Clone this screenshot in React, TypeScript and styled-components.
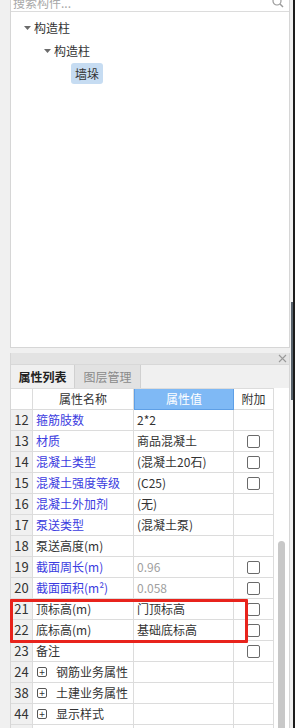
import React from 'react'
import styled, {createGlobalStyle} from 'styled-components'

const GlobalStyle = createGlobalStyle`
  html, body {
    margin: 0;
    padding: 0;
    background: #f0f0f0;
    overflow: hidden;
  }
  body {
    font-family: "Noto Sans CJK SC", "Noto Sans", sans-serif;
    font-size: 12px;
    color: #333;
  }
`

const Page = styled.div`
  display: flex;
  width: 295px;
  height: 728px;
  overflow: hidden;
`

const Main = styled.div`
  width: 280px;
  padding-left: 10px;
  display: flex;
  flex-direction: column;
`

const Edge = styled.div`
  width: 5px;
  display: flex;
  padding-left: 1px;
  box-sizing: border-box;
`
const EdgeInner = styled.div`
  width: 2px;
  display: flex;
  flex-direction: column;
`
const EdgeSpacer = styled.div`
  height: 302px;
`
const EdgeSlate = styled.div`
  height: 98px;
  background: #57626c;
`
const EdgeLine = styled.div`
  width: 2px;
  background: #1c1c1c;
`

/* ---------- tree panel ---------- */

const TreePanel = styled.div`
  height: 348px;
  box-sizing: border-box;
  background: #fff;
  border: 1px solid #d6d6d6;
  border-top: none;
  display: flex;
  flex-direction: column;
`

const SearchRow = styled.div`
  height: 11px;
  border-bottom: 1px solid #dcdcdc;
  display: flex;
  align-items: flex-end;
  justify-content: space-between;
  padding: 0 5px 0 2px;
  overflow: hidden;
`
const SearchText = styled.span`
  color: #a8a8a8;
  font-size: 12px;
  line-height: 14px;
  margin-bottom: 1px;
`

const TreeBody = styled.div`
  flex: 1;
  padding-top: 4px;
  display: flex;
  flex-direction: column;
`

const TreeRow = styled.div<{level: number}>`
  height: 23px;
  display: flex;
  align-items: center;
  padding-left: ${(p) => 13 + p.level * 20}px;
`
const Caret = styled.span`
  width: 7px;
  margin-right: 3px;
  display: flex;
  align-items: center;
`
const LeafGap = styled.span`
  width: 7px;
`
const TreeLabel = styled.span<{selected?: boolean}>`
  line-height: 21px;
  height: 21px;
  padding: ${(p) => (p.selected ? '0 4px' : '0')};
  border-radius: 3px;
  background: ${(p) => (p.selected ? '#c6dcf2' : 'transparent')};
  color: #333;
`

/* ---------- property panel ---------- */

const Gap = styled.div`
  height: 5px;
`

const PropPanel = styled.div`
  flex: 1;
  display: flex;
  flex-direction: column;
  border-left: 1px solid #d6d6d6;
  border-right: 1px solid #d6d6d6;
  background: #f0f0f0;
  min-height: 0;
`

const TitleBar = styled.div`
  height: 11px;
  background: #e3e3e3;
  display: flex;
  align-items: center;
  justify-content: flex-end;
  padding-right: 2px;
`

const TabStrip = styled.div`
  height: 23px;
  display: flex;
  border-top: 1px solid #d8d8d8;
`
const Tab = styled.div<{active?: boolean}>`
  width: ${(p) => (p.active ? '63px' : '65px')};
  display: flex;
  align-items: center;
  justify-content: center;
  border-right: 1px solid #d0d0d0;
  background: ${(p) => (p.active ? '#f0f0f0' : '#e2e2e2')};
  color: ${(p) => (p.active ? '#222' : '#8a8a8a')};
  font-weight: ${(p) => (p.active ? 700 : 400)};
  font-size: 12px;
`

const TableArea = styled.div`
  flex: 1;
  display: flex;
  min-height: 0;
`

const Table = styled.div`
  width: 263px;
  display: flex;
  flex-direction: column;
  background: #fff;
`

const Row = styled.div<{header?: boolean}>`
  display: grid;
  grid-template-columns: 22px 101px 100px 40px;
  height: ${(p) => (p.header ? '22px' : '21px')};
  flex-shrink: 0;
  border-top: ${(p) => (p.header ? '1px solid #dcdcdc' : 'none')};
  box-sizing: border-box;
`

const Cell = styled.div<{kind?: 'num' | 'name' | 'value' | 'extra' | 'hot'}>`
  box-sizing: border-box;
  border-right: 1px solid #dcdcdc;
  border-bottom: 1px solid #dcdcdc;
  display: flex;
  align-items: center;
  overflow: hidden;
  white-space: nowrap;
  line-height: 20px;
  padding-left: ${(p) => (p.kind === 'name' || p.kind === 'value' ? '3px' : '0')};
  justify-content: ${(p) =>
    p.kind === 'num' || p.kind === 'extra' ? 'center' : 'flex-start'};
  background: ${(p) =>
    p.kind === 'num' ? '#f0f0f0' : p.kind === 'hot' ? '#7fb9f5' : '#fff'};
`

const HeadCell = styled(Cell)`
  justify-content: center;
  padding-left: 0;
  color: ${(p) => (p.kind === 'hot' ? '#fff' : '#333')};
  ${(p) => (p.kind === 'hot' ? 'border: 1px solid #5e9fe6; border-top: none;' : '')}
`

const NumText = styled.span`
  font-size: 13px;
  color: #333;
`

const NameText = styled.span<{blue?: boolean}>`
  color: ${(p) => (p.blue ? '#3b3be0' : '#333')};
`

const ValueText = styled.span<{muted?: boolean}>`
  color: ${(p) => (p.muted ? '#a0a0a0' : '#333')};
`

const Check = styled.span`
  width: 13px;
  height: 13px;
  box-sizing: border-box;
  border: 1px solid #6a6a6a;
  border-radius: 2px;
  background: #fff;
`

const Expander = styled.span`
  width: 10px;
  height: 10px;
  box-sizing: border-box;
  border: 1px solid #555;
  border-radius: 2px;
  margin: 0 9px 0 1px;
  display: flex;
  align-items: center;
  justify-content: center;
  font-size: 10px;
  line-height: 10px;
  color: #333;
`

const Marked = styled.div`
  position: relative;
  display: flex;
  flex-direction: column;
  &::after {
    content: '';
    position: absolute;
    left: -1px;
    right: 26px;
    top: 0;
    bottom: -2px;
    border: 3px solid #e8231c;
    border-radius: 1px;
    pointer-events: none;
  }
`

const ScrollTrack = styled.div`
  width: 15px;
  background: #fff;
  display: flex;
  justify-content: center;
`
const Thumb = styled.div`
  width: 7px;
  margin-top: 153px;
  height: 220px;
  border-radius: 4px;
  background: #c8c8c8;
`

type Prop = {
  n: number
  name: string
  blue?: boolean
  value?: string
  muted?: boolean
  check?: boolean
  group?: boolean
}

const props: Prop[] = [
  {n: 12, name: '箍筋肢数', blue: true, value: '2*2'},
  {n: 13, name: '材质', blue: true, value: '商品混凝土', check: true},
  {n: 14, name: '混凝土类型', blue: true, value: '(混凝土20石)', check: true},
  {n: 15, name: '混凝土强度等级', blue: true, value: '(C25)', check: true},
  {n: 16, name: '混凝土外加剂', blue: true, value: '(无)'},
  {n: 17, name: '泵送类型', blue: true, value: '(混凝土泵)'},
  {n: 18, name: '泵送高度(m)'},
  {n: 19, name: '截面周长(m)', blue: true, value: '0.96', muted: true, check: true},
  {n: 20, name: '截面面积(m²)', blue: true, value: '0.058', muted: true, check: true}
]

const marked: Prop[] = [
  {n: 21, name: '顶标高(m)', value: '门顶标高', check: true},
  {n: 22, name: '底标高(m)', value: '基础底标高', check: true}
]

const rest: Prop[] = [
  {n: 23, name: '备注', check: true},
  {n: 24, name: '钢筋业务属性', group: true},
  {n: 38, name: '土建业务属性', group: true},
  {n: 44, name: '显示样式', group: true}
]

const PropRow = ({p}: {p: Prop}) => (
  <Row>
    <Cell kind="num">
      <NumText>{p.n}</NumText>
    </Cell>
    <Cell kind="name">
      {p.group && <Expander>+</Expander>}
      <NameText blue={p.blue}>{p.name}</NameText>
    </Cell>
    <Cell kind="value">
      <ValueText muted={p.muted}>{p.value}</ValueText>
    </Cell>
    <Cell kind="extra">{p.check && <Check />}</Cell>
  </Row>
)

const CaretIcon = () => (
  <svg width="7" height="4" viewBox="0 0 7 4">
    <path d="M0 0 L7 0 L3.5 4 Z" fill="#6b6b6b" />
  </svg>
)

const SearchIcon = () => (
  <svg width="12" height="12" viewBox="0 0 12 12" style={{marginBottom: 3}}>
    <circle cx="5" cy="5" r="4" fill="none" stroke="#9a9a9a" strokeWidth="1.2" />
    <path d="M8 8 L11 11" stroke="#9a9a9a" strokeWidth="1.4" />
  </svg>
)

const CloseIcon = () => (
  <svg width="9" height="9" viewBox="0 0 9 9">
    <path d="M1 1 L8 8 M8 1 L1 8" stroke="#9a9a9a" strokeWidth="1.1" />
  </svg>
)

const App = () => {
  return (
    <Page>
      <GlobalStyle />
      <Main>
        <TreePanel>
          <SearchRow>
            <SearchText>搜索构件...</SearchText>
            <SearchIcon />
          </SearchRow>
          <TreeBody>
            <TreeRow level={0}>
              <Caret>
                <CaretIcon />
              </Caret>
              <TreeLabel>构造柱</TreeLabel>
            </TreeRow>
            <TreeRow level={1}>
              <Caret>
                <CaretIcon />
              </Caret>
              <TreeLabel>构造柱</TreeLabel>
            </TreeRow>
            <TreeRow level={2}>
              <LeafGap />
              <TreeLabel selected>墙垛</TreeLabel>
            </TreeRow>
          </TreeBody>
        </TreePanel>

        <Gap />

        <PropPanel>
          <TitleBar>
            <CloseIcon />
          </TitleBar>
          <TabStrip>
            <Tab active>属性列表</Tab>
            <Tab>图层管理</Tab>
          </TabStrip>
          <TableArea>
            <Table>
              <Row header>
                <HeadCell />
                <HeadCell>属性名称</HeadCell>
                <HeadCell kind="hot">属性值</HeadCell>
                <HeadCell>附加</HeadCell>
              </Row>
              {props.map((p) => (
                <PropRow key={p.n} p={p} />
              ))}
              <Marked>
                {marked.map((p) => (
                  <PropRow key={p.n} p={p} />
                ))}
              </Marked>
              {rest.map((p) => (
                <PropRow key={p.n} p={p} />
              ))}
              <Row>
                <Cell kind="num" />
                <Cell kind="name" />
                <Cell kind="value" />
                <Cell kind="extra" />
              </Row>
            </Table>
            <ScrollTrack>
              <Thumb />
            </ScrollTrack>
          </TableArea>
        </PropPanel>
      </Main>
      <Edge>
        <EdgeInner>
          <EdgeSpacer />
          <EdgeSlate />
        </EdgeInner>
        <EdgeLine />
      </Edge>
    </Page>
  )
}

export default App
